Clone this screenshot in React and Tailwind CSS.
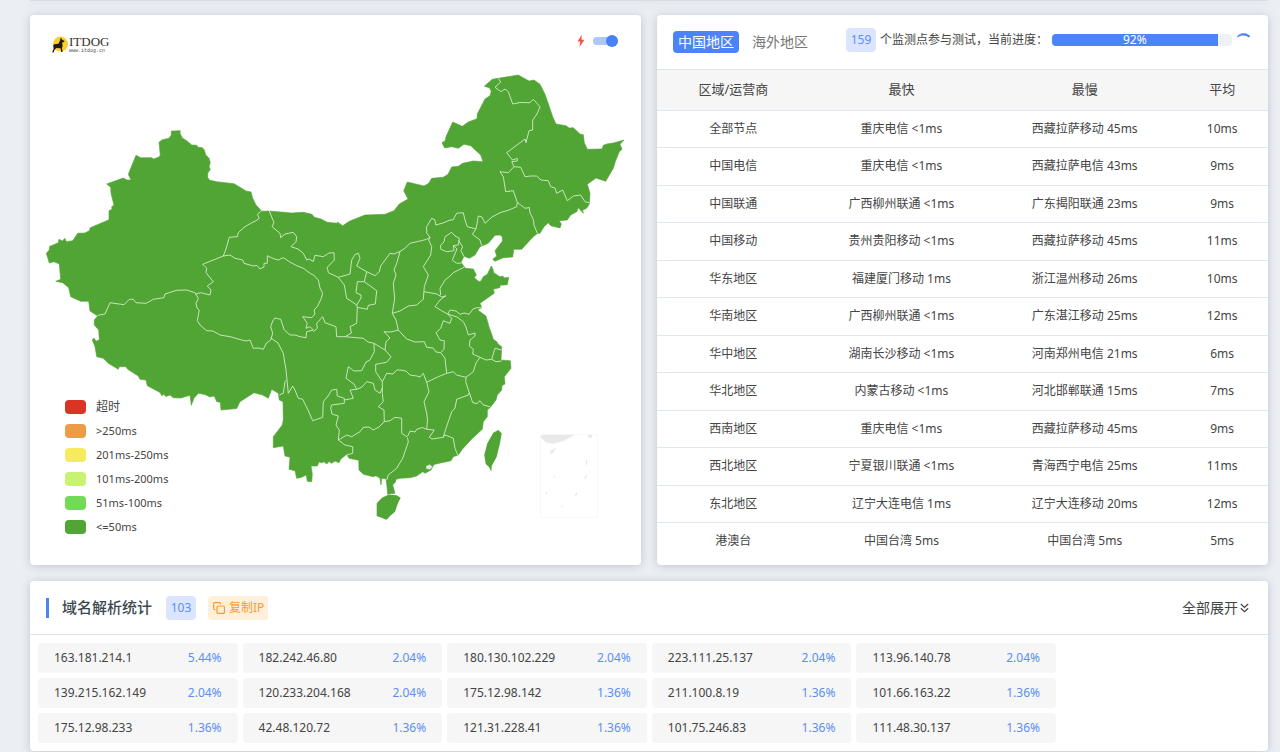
import { useState } from 'react';

const MAINLAND =
    'M49.5 246.5L58.3 242.7L59 239.3L62.3 241L65 238.3L66.3 241.7L72.7 240.7L77.7 233.3L85 233L89.3 230.7L90.3 227.7L109 219.7L109 210.7L112 209.3L111.7 206.7L114 205.3L111 193.3L110.7 187.3L106.7 184L123.3 178L127 180L131 180L128.3 174.3L136 155.3L140.7 157.7L151.7 157.7L153.7 159L159 157L160.3 155L159 142.3L162.3 139.7L169 138.3L171.3 135L171.3 131L180.3 130.7L180 133.3L182.3 138L186.7 140.7L191.7 145L196.7 145.3L198.3 147.3L202.3 147.7L204.3 150L205.7 154.7L209 158.3L210.3 162.7L209 166.7L210.3 169.3L207.7 173.3L207.7 177.5L209.3 180L216.7 181.7L234 183.7L240 187.3L246 191L251 192L252.7 198.3L256 205L260.7 210L261.3 211.3L269.3 211L291.7 213L303.3 212.3L312 214.3L314.3 217.3L321 219L327.3 222.3L337.3 223.3L337.4 222L342.7 225.7L349.3 221.3L365 215L385 214.3L394 210.7L399.3 204L408 199L403.7 190.7L407.3 182L424 186L428.7 183.3L431.7 178.3L443.3 177.3L448 174.3L451.7 167L458.3 166.3L462.7 163.3L473.3 161L483 161.7L480.7 155L470.7 145.7L464 144.3L458.3 148.3L451.7 146.7L444.7 148L442 142.7L445 141L446 136.7L452.7 122L462.3 126.3L468.3 122L477 118.7L477.3 114L485 99L490 95.7L491.3 91.3L489.3 87.7L484.3 86.3L492.3 79.3L518.3 75L529 81L534 80L540 84.3L545 94.3L549 105.7L552.7 116.7L556 124L566 125.7L569.3 128L573.3 127.7L580 134L583.3 134.7L584.3 142.7L587.3 149.3L602 149L603.3 145.3L606.7 144L613.3 143L624 140L620 144.3L622 149.3L619.3 151.7L615.3 161.7L613.3 168.3L605.7 181.3L596 178L587.3 184.3L590 193.3L589.3 204L586.7 208.3L582.7 210L583.3 213.3L578.3 207.7L576.7 211.7L570.7 215L567.3 220L559.3 220.7L561.3 224L560 228L550.7 225.7L548.3 222.7L544 226.7L540 233.3L537.7 233.3L533.3 236.7L521.7 249.3L513.7 249.3L512.7 257L503.3 257.7L495 261.3L492.7 259.3L496.7 256L495 250.7L502.3 241.3L502.3 236.7L500 235L495 235.3L488.3 243.3L480 246.7L475 255L469.3 258.3L464 256.3L461 262.3L465.3 268.3L473.3 269L476.3 275L474.3 277.7L479 281.7L481 281L483.3 276.7L487.3 274.3L491.3 266L493 269.3L493.7 272.7L500 276.7L503 276L504 278L508.7 277.3L507.3 284.7L500 285.3L500 287.5L493.3 289.3L494.3 293.3L480 303.3L481.7 307.7L477.7 310L486 316L489 326.7L491.7 334.3L493.3 339.3L497 342L498 344L501.7 346.7L501 360L510.3 360.7L511 368.3L508.3 371.7L504.3 376.7L505 384L502 385.5L501.7 390L497.3 395L496 400L490 407.7L487.3 410L487.3 416.7L483.3 421.7L482.3 429.3L471.7 439L462.3 449.3L458.3 455L453.3 456.7L451 460.7L441.7 462.7L434 464.5L431 470L425 473.3L422.7 471.7L416.7 476L410 477.7L400 478.3L396 479.3L395.5 482L392.7 485L395 493.3L387.7 494.3L387 486.7L386 479L381.7 478.3L381 485L380 478.3L376 475.7L373.3 476.7L363.3 474.3L359 470L358.7 460.3L349 458.3L346.7 454.3L340.7 459.3L339 462.7L335 461L331.7 463.3L329 461.5L326.7 464L324 461.7L321.7 462.7L319 462L317.3 466L311 466L312.3 474L311.7 481.7L307.3 481.3L306.3 475L301 477.5L296.7 478.3L295 470.7L289 469.3L290 457.3L285 456L283.3 446L273.3 447.7L273.3 436.7L282.3 425L283.3 420L283 401.7L279.3 400L278.3 393.3L271.7 389.3L268.3 398.3L262.7 395L254 392.7L240 401.7L236.7 408.5L221 410L220.3 402.3L216.7 401.7L214.3 396L210 397L205 394.5L198.3 393.3L194 398.3L191.3 405.3L190 395.3L180.7 398L173.3 397.7L170 395L166 396.5L163.3 394L162 396L160 392.5L156.7 390.7L147.3 385.7L146 380L140 379.3L138.3 376L127.7 369.3L126 366.7L119.3 366.7L118.3 369.3L108.3 363.3L103.3 358.3L96.7 356.7L95 346.7L92.3 340L94 338L96 341.3L99.3 339.7L98.7 330L94.3 325L94.3 320L97.7 316L90 311L88.7 301.3L80.7 301.3L70.7 296.7L68.7 287.7L62.7 282.7L55.7 281.3L60.7 279.3L59.3 264L54 261.7L49.3 263L46.3 253.3L49.3 250Z';

const HAINAN = 'M376.7 503.3L382 497.7L388.3 494.8L396.7 495.3L400.7 497.7L398 503L395 511.7L390 516L386.7 519.7L376.7 516Z';
const TAIWAN = 'M498.3 430L501.7 433.3L500 443L496.7 456.7L491.7 466L491.3 471.7L489 467L485.7 464L484.3 455L487.3 443.3L493.3 432.7Z';

const BORDERS = [
    // Xinjiang, Tibet, Qinghai
    'M260.7 211.3L257.3 214.3L259.3 218.3L256 220.7L250.7 223.3L244 227.3L238.3 232.7L237.3 236.7L229.3 237.3L225.7 250L223.3 256L202.7 264.3L206.7 268.3L206 272.7L213.3 281.7L207.3 286L211 290L210 295L200.7 292.7L195.7 294',
    'M223.3 256L230 255L235 258.3L242.7 260L244 263.3L253.3 266L257 265.5L260 269L264 267L264 263.3L267.3 263.3L267.3 255.7L273 258.5L278.3 260L283.3 257.7L290 262L296.7 265.7L303 268L310 273.3L313.5 275L318.3 280L320 288L322.7 293.3L321 299L317.3 306.7L314 310L315 314L311.7 317.7L302.7 316.7L307.3 323.3L306 328.3L310 326.7L313.3 330L306.7 331.7L306 337.7L300 336.7L295 335L290 335L284.3 330L280.7 319.3L275 318L272.7 321L270.7 326.7L272.7 333.3L270.7 340L266.5 343L263.3 349.3L259 348L253.3 348.3L250 340L246 341L241.7 340L230 336.7L220 335L213 331L206.7 330.7L200 325L197.3 320.7L199.3 310L197 308L196 303.3L198.3 298.3L195 292.7L186.7 290L176.7 290.3L165 294L164 297.7L153.3 299.3L146 303.3L136 302.7L133.3 299.3L129.3 299.3L124 304.7L110 302.7L105 314L97.7 315.3',
    // Gansu, Ningxia
    'M269.3 211L274 222.7L272 226.7L280 233.3L280.7 237.7L285 234L293.3 232.3L296.7 236.7L296 241.7L291 246.7L298 249L303.3 253.3L306.7 260L309 259L313.3 261.5L315 255.3L323.3 256.7L329 253L334 252.7L334.3 260L327.3 267.3L328.3 272.7L338.3 277.3L350 274L351.7 260L355 254.5L358.3 253.3L360 258.3L356.7 266L366.7 271.7L364.3 281.7L376.7 290.7L375.3 304L368.3 305.3L367.3 309.3L357.3 307.3L356.7 305L361 298L361 295L356 292.7L357.3 281.7L364.3 281.7',
    'M338.3 277.3L344.3 285L346.7 298.3L351 301L356.7 305',
    'M357.3 307.3L356.7 323.3L350 326.7L351.5 333L345 336.7L336.7 336.7L336 326.7L325 322.7L322.7 316.7L316.7 323.3L317.3 328.3L313.3 331.7',
    // Shaanxi, Shanxi
    'M366.7 271.7L375 275.7L379.3 271.7L380.7 266L390 253.3L394 254L399.3 251.7L404 249L410 243.3L418 241.5L426.7 239.3L430 237.3',
    'M400 251.7L396.7 263.3L394 270L396 275L393.3 283.3L394.7 298.3L392.3 313.3L396 320L398.3 330L406.7 339L415 342L424.3 341.7L426.7 347.3L433 348L436 352L440.7 352.7',
    'M430 237.3L428.7 240L431.7 246.7L430.7 255L423.3 266.7L428.3 275L424.3 286.7L423.3 299.3L416.7 305L408.3 306L400 311L392.3 313.3',
    'M345 336.7L363.3 338.3L368 342L374 343.3L385 350L386 341.7L390 338L384 331.7L391 332L398.3 330',
    // Hebei, Beijing, Tianjin
    'M430 237.3L426.7 233L426.7 226.7L431.7 218.3L435 220L435.7 225L443 223L450 220L453 220L456.7 213.3L463.3 212.7L465 220L467.3 226.7L476 229L478.3 216L482 217L485 223.3L492 217L500 212.7L509 210L516.7 206.7L517.3 202.3',
    'M476 229L472.3 234.3L480 240L481.7 245.7',
    'M451.7 232.3L455 236L459.3 238.3L458.3 245L453.3 245.5L454 250.7L446.7 251.7L440.7 249.3L440.7 245L444 242L445 236.7Z',
    'M458.3 240L462.5 246.7L461 250.7L464 256.7M454 246L457 249L452.3 260L456.7 263.3L461.5 263',
    'M464 267.3L453.3 272.7L450 276L445 280L440 288.3L440.7 295M424 291.7L436.7 294L442 297L446 295.7L440 300L435 306.7L442 311L447.7 314L450 310L456 311L460 314.3L464 313L469 314.3L473 309L476.7 307.7L481.7 307.7',
    // Northeast
    'M517.3 202.3L525 208.3L529.3 207.5L530 213L533.3 219.3L534 225L537.3 233.3',
    'M517.3 202.3L513.3 190.7L505.7 191.7L503.3 176.7L500 171.7L508.3 172.7L514 166.7L520.7 167.3L525 176.7L531 176L536.7 176L541 180L548.3 180.7L550.7 186.7L555 188L556.7 193.3L562.7 190L567.3 200.7L573.3 196L580.7 195L585 201.7L589.3 202.7',
    'M514 166.7L511.7 161.7L517.3 161L517.3 158.3L512.5 160L506.7 152.7L525 139L526 142.7L529 130.7L532.7 130L532.7 120L537 114L540 106.7L533.3 99.3L530 102.7L520 102.5L512.7 104L508.3 91.7L505 89L501 91.7L495 87.3L500.7 82L498.3 78.3',
    // East
    'M447.7 314L451.7 318.3L450 323.3L443.3 320.7L440.7 328.3L436 332.7L440 340L444.3 340.7L444 349.3L440.7 352.7L445 358.3L446.7 373.3L453.3 371.7L456.7 375L466 377.3L473.3 371.7L476 363L480 357.3L472.7 354L473.3 349.3L469.3 346L470 340L475 336L475 333L468.3 335L466 327L463.3 321.7L457 317L447.7 314',
    'M480 357.3L486 360L491.7 359.3L495 348.3L501.7 350M491.7 359.3L496 361.7L501.7 361',
    'M446.7 373.3L438.3 376.7L426.7 382.3L423.3 373.3L420 377L416.7 376L410 375L406 371L400 370L396.7 370L393 374L386.7 373.3L382.3 381.7',
    'M426.7 382.3L429 391.7L424 401.7L426.7 413.3L427.5 420L426.7 429.3L434.3 430L429.3 437.3L432 439L443.3 437.3L446 428.3L451.7 411.7L455 408L456.7 399.3L468.3 395L469.3 392.7L465.7 381.7L466 377.3',
    'M469.3 392.7L472.7 402.7L477 403.5L480 400.7L483.3 405L490 406.7M443.3 437.3L444.3 435L448 436L453.3 438.3L455 448.3L457.7 455',
    // South
    'M426.7 429.3L422 427.5L416.7 429.3L415 432L410 431L408.3 435L406.7 436.7L401.7 433.3L401.7 418.3L395 417.3L390 420.7L384.3 421.7L379 427L373.3 430L369 427L363.3 427.3L360 431.7L351.7 436.7L346.7 435L338.3 440L345 445L352.7 446.7L352.7 453.3L346.7 455',
    'M407.5 437.5L408.3 442L406.7 446.7L402.7 458.3L396.7 468.3L388.3 475L386.7 480',
    'M382.3 381.7L382.3 393.3L383.3 401.7L378.3 406.7L384 410L384.3 421.7',
    'M338.3 440L339.3 430L336 425L338.3 416L332 414L330.7 408L331.7 405L344.3 403.3L344.3 398.3L337.3 396L336.7 389.3L331.7 390L328 396L323.3 401.7L322.7 417.3L312.7 420.7L308 410L302.7 399.3L298.3 398.3L295 390L292.7 386L288.3 393.3L286 370L283.3 353.3L278 343L270.7 338',
    'M286.5 380L285 381.7L283.3 393.3L279.3 395',
    'M344.3 400L353.3 398.3L350 390L356.7 389.3L362 387L366.7 381.7L373.3 383.3L375 390L380 393.3L382.3 388M356.7 389.3L354 384L346 378.3L348.3 366.7L354 371L361.7 370.7L366 362L370 360L374.3 351.7L374 343.3',
    'M382.3 381.7L375.7 371.7L375.7 364.3L386.7 362.3L391 356.7L385 350'
];

const ISLETS =
    'M540 437L543 434.5L575.7 434.5L563.3 441L553.3 443.7L546.7 442.7ZM551 450L556 448L553 453L550 454ZM587 435L592 435L592 437L590 439ZM586 459L587.5 461L587 465L586 465ZM584 478L587 474L586 479ZM574 496L577 492L577 495ZM545 492L547 492L547 495ZM561 508L563 505L563 507ZM553 478L555 475L555 477Z';

const legend = [
    { color: 'bg-[#d93424]', label: '超时' },
    { color: 'bg-[#ec9b46]', label: '>250ms' },
    { color: 'bg-[#f6eb5e]', label: '201ms-250ms' },
    { color: 'bg-[#c8f272]', label: '101ms-200ms' },
    { color: 'bg-[#71da56]', label: '51ms-100ms' },
    { color: 'bg-[#51a534]', label: '<=50ms' }
];

const regions = [
    ['全部节点', '重庆电信 <1ms', '西藏拉萨移动 45ms', '10ms'],
    ['中国电信', '重庆电信 <1ms', '西藏拉萨电信 43ms', '9ms'],
    ['中国联通', '广西柳州联通 <1ms', '广东揭阳联通 23ms', '9ms'],
    ['中国移动', '贵州贵阳移动 <1ms', '西藏拉萨移动 45ms', '11ms'],
    ['华东地区', '福建厦门移动 1ms', '浙江温州移动 26ms', '10ms'],
    ['华南地区', '广西柳州联通 <1ms', '广东湛江移动 25ms', '12ms'],
    ['华中地区', '湖南长沙移动 <1ms', '河南郑州电信 21ms', '6ms'],
    ['华北地区', '内蒙古移动 <1ms', '河北邯郸联通 15ms', '7ms'],
    ['西南地区', '重庆电信 <1ms', '西藏拉萨移动 45ms', '9ms'],
    ['西北地区', '宁夏银川联通 <1ms', '青海西宁电信 25ms', '11ms'],
    ['东北地区', '辽宁大连电信 1ms', '辽宁大连移动 20ms', '12ms'],
    ['港澳台', '中国台湾 5ms', '中国台湾 5ms', '5ms']
];

const resolved = [
    ['163.181.214.1', '5.44%'],
    ['182.242.46.80', '2.04%'],
    ['180.130.102.229', '2.04%'],
    ['223.111.25.137', '2.04%'],
    ['113.96.140.78', '2.04%'],
    ['139.215.162.149', '2.04%'],
    ['120.233.204.168', '2.04%'],
    ['175.12.98.142', '1.36%'],
    ['211.100.8.19', '1.36%'],
    ['101.66.163.22', '1.36%'],
    ['175.12.98.233', '1.36%'],
    ['42.48.120.72', '1.36%'],
    ['121.31.228.41', '1.36%'],
    ['101.75.246.83', '1.36%'],
    ['111.48.30.137', '1.36%']
];

function Logo() {
    return (
        <div className="flex items-center">
            <svg width="18" height="18" viewBox="0 0 18 18" aria-hidden="true">
                <circle cx="9.5" cy="8" r="7.5" fill="#fbcf2d" />
                <path
                    d="M9.8 1.5L11 3.6L13.4 5L13.2 6L11.2 6.4L11.6 10L11 12L11.6 16H10.2L9.6 12.2L5.4 12L3.4 14L2.8 16.2L1.2 16.6L2.6 12.6L2.2 9.2L3.4 8.2L7.4 7.8L8.8 5Z"
                    fill="#231a14"
                />
            </svg>
            <div className="text-[#33302e]">
                <div className="font-['Liberation_Serif',serif] text-[13px] leading-[14px]">ITDOG</div>
                <div className="font-['Liberation_Mono',monospace] text-[5px] leading-[5px] text-[#555]">www.itdog.cn</div>
            </div>
        </div>
    );
}

function ChinaMap() {
    return (
        <svg viewBox="30 60 611 470" className="block w-full" role="img" aria-label="中国地图">
            <path d={MAINLAND} fill="#51a534" stroke="#51a534" strokeWidth="0.6" strokeLinejoin="round" />
            <path d={HAINAN} fill="#51a534" />
            <path d={TAIWAN} fill="#51a534" />
            <path d={BORDERS.join('')} fill="none" stroke="#d3ecc9" strokeWidth="0.9" strokeLinejoin="round" />
            <path d="M426 466L430 464.5L432.5 467L430 469.5L426.5 469Z" fill="#e8e8e8" />
            <path d={ISLETS} fill="#e9e9e9" />
            <rect x="540.5" y="434.5" width="57" height="83" fill="none" stroke="#f8f8f8" />
        </svg>
    );
}

function MapCard() {
    const [fast, setFast] = useState(true);

    return (
        <section className="relative rounded bg-white shadow-[0_1px_9px_rgba(60,72,100,0.25)]">
            <div className="flex h-[45px] items-start justify-between pt-5 pr-[23px] pl-[21px]">
                <Logo />
                <label className="flex h-3 items-center gap-2">
                    <svg width="8" height="12" viewBox="0 0 8 12" fill="#f0544a" aria-hidden="true">
                        <path d="M4.6 0L0.5 6.6H3.2L2.5 12L7.5 4.7H4.6Z" />
                    </svg>
                    <input
                        type="checkbox"
                        aria-label="快速模式"
                        className="peer sr-only"
                        checked={fast}
                        onChange={() => setFast(!fast)}
                    />
                    <span className="flex h-2 w-[25px] items-center rounded-full bg-[#adc7fa] peer-checked:justify-end">
                        <span className="h-3 w-3 shrink-0 rounded-full bg-[#4a80f6]" />
                    </span>
                </label>
            </div>
            <ChinaMap />
            <ul className="absolute bottom-[26px] left-[35px] text-[11px] text-[#444]">
                {legend.map((item) => (
                    <li key={item.label} className="flex h-6 items-center first:text-xs">
                        <span className={`mr-2.5 h-3.5 w-[21px] rounded ${item.color}`} />
                        {item.label}
                    </li>
                ))}
            </ul>
        </section>
    );
}

function RegionCard() {
    const [tab, setTab] = useState('china');
    const progress = 92;

    const tabClass = (name) =>
        tab === name ? 'rounded bg-[#4c84f8] px-[5px] text-white' : 'rounded px-[5px] text-[#777]';

    return (
        <section className="rounded bg-white pb-[5px] shadow-[0_1px_9px_rgba(60,72,100,0.25)]">
            <div className="flex h-[55px] items-start border-b border-[#e0e6f0] pt-[13px] pl-4">
                <div className="flex gap-2 pt-[3px] text-sm leading-[22px]">
                    <button className={tabClass('china')} onClick={() => setTab('china')}>中国地区</button>
                    <button className={tabClass('oversea')} onClick={() => setTab('oversea')}>海外地区</button>
                </div>
                <div className="ml-[33px] flex items-center text-xs text-[#444]">
                    <span className="w-[30px] rounded bg-[#dbe6fe] text-center leading-6 text-[#5b8ef8]">159</span>
                    <span className="ml-1 whitespace-nowrap">个监测点参与测试，当前进度：</span>
                    <div className="ml-1 h-3 w-[180px] rounded bg-[#eef1f5]">
                        <div
                            className="flex h-full items-center justify-center rounded-l bg-[#4c84f8] text-xs text-white"
                            style={{ width: `${progress}%` }}
                        >
                            {progress}%
                        </div>
                    </div>
                    <svg className="ml-1" width="16" height="16" viewBox="0 0 16 16" fill="none" aria-hidden="true">
                        <path d="M1.2 4.6C4.5 0.6 10.5 0.4 14 4.2L13 5.2C9.8 2.6 5.2 2.4 1.8 5Z" fill="#4c84f8" stroke="#4c84f8" strokeWidth="0.6" />
                    </svg>
                </div>
            </div>
            <table className="w-full table-fixed text-center text-xs text-[#444]">
                <thead>
                    <tr className="h-10 border-b border-[#e0e6f0] bg-[#f6f6f6] text-[13px]">
                        <th className="w-1/4 font-normal">区域/运营商</th>
                        <th className="w-[30%] font-normal">最快</th>
                        <th className="w-[30%] font-normal">最慢</th>
                        <th className="w-[15%] font-normal">平均</th>
                    </tr>
                </thead>
                <tbody>
                    {regions.map((row) => (
                        <tr key={row[0]} className="h-[37px] border-b border-[#e0e6f0] last:border-0 even:h-[38px]">
                            {row.map((cell, i) => (
                                <td key={i}>{cell}</td>
                            ))}
                        </tr>
                    ))}
                </tbody>
            </table>
        </section>
    );
}

function ResolveCard() {
    return (
        <section className="rounded bg-white shadow-[0_1px_9px_rgba(60,72,100,0.25)]">
            <div className="flex h-[54px] items-center border-b border-[#dfe2e8] px-4">
                <h2 className="flex items-center text-[15px] font-medium text-[#3c4850]">
                    <span className="mr-[13px] h-5 w-[3px] bg-[#4c84f8]" />
                    域名解析统计
                </h2>
                <span className="ml-[14px] w-[30px] rounded bg-[#dbe6fe] text-center text-xs leading-6 text-[#5b8ef8]">103</span>
                <button className="ml-3 flex items-center gap-1 rounded bg-[#fff0dc] pr-1 pl-[5px] text-xs leading-6 text-[#fb9a2c]">
                    <svg width="12" height="12" viewBox="0 0 12 12" fill="none" stroke="currentColor" strokeWidth="1.2" aria-hidden="true">
                        <rect x="4" y="4" width="7.4" height="7.4" rx="1" />
                        <path d="M2.4 7.6H1.6A1 1 0 0 1 0.6 6.6V1.6A1 1 0 0 1 1.6 0.6H6.6A1 1 0 0 1 7.6 1.6V2.2" />
                    </svg>
                    复制IP
                </button>
                <button className="ml-auto flex items-center gap-0.5 pr-[3px] text-sm text-[#444]">
                    全部展开
                    <svg width="9" height="10" viewBox="0 0 9 10" fill="none" stroke="currentColor" strokeWidth="1.2" aria-hidden="true">
                        <path d="M0.8 1L4.5 4.5L8.2 1M0.8 5.2L4.5 8.7L8.2 5.2" />
                    </svg>
                </button>
            </div>
            <ul className="grid max-w-[1034px] grid-cols-5 gap-[5px] p-2 text-xs">
                {resolved.map(([ip, rate]) => (
                    <li key={ip} className="flex h-[30px] items-center justify-between rounded bg-[#f6f6f6] px-4 text-[#444]">
                        {ip}
                        <span className="text-[#5b8ef8]">{rate}</span>
                    </li>
                ))}
            </ul>
        </section>
    );
}

export default function App() {
    return (
        <div className="min-h-screen bg-[#ebeff4] pr-3 pl-[30px] font-['Noto_Sans','Noto_Sans_CJK_SC',sans-serif]">
            <div className="h-px bg-[#d8dbe1] shadow-[0_1px_9px_rgba(60,72,100,0.25)]" />
            <div className="grid grid-cols-2 gap-4 pt-[14px] pb-4">
                <MapCard />
                <RegionCard />
            </div>
            <ResolveCard />
        </div>
    );
}
